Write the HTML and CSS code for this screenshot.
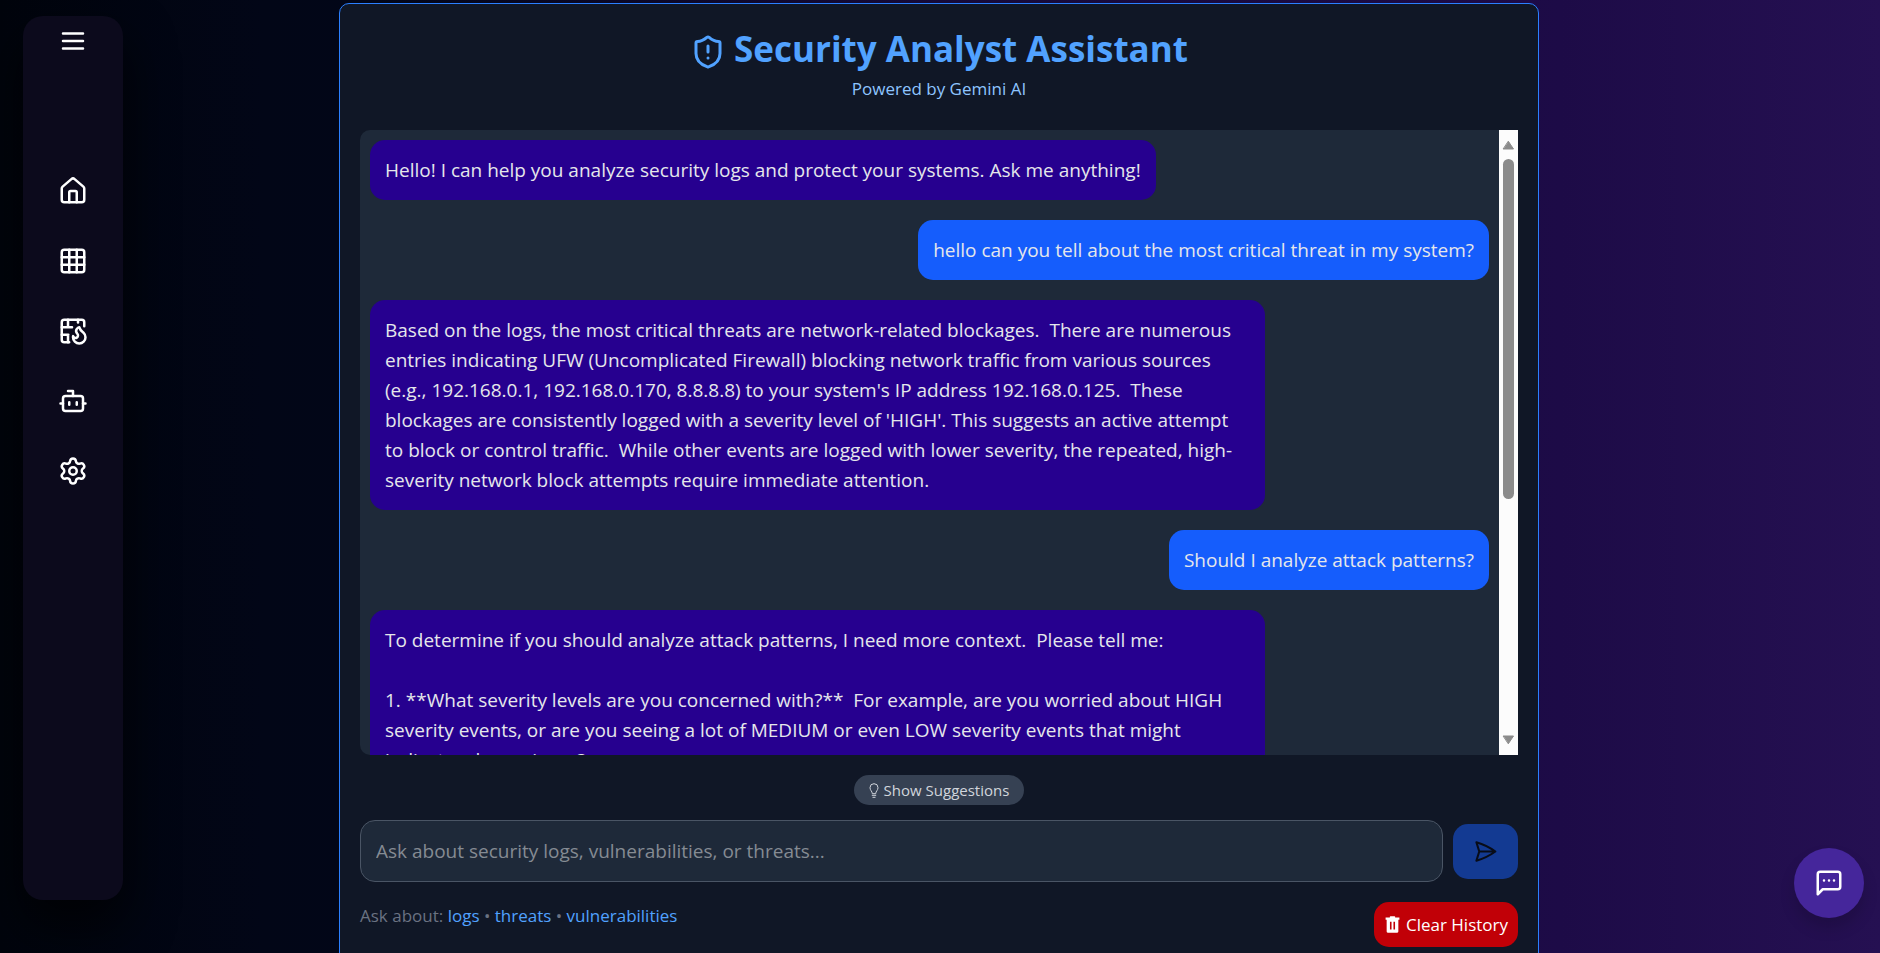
FILE: index.html
```html
<!DOCTYPE html>
<html lang="en">
<head>
<meta charset="utf-8">
<meta name="viewport" content="width=device-width, initial-scale=1">
<title>Security Analyst Assistant</title>
<link rel="stylesheet" href="styles.css">
</head>
<body>
<aside class="sidebar">
  <button class="nav-item" type="button" aria-label="Toggle menu">
    <svg class="icon" viewBox="0 0 24 24"><path d="M4 6h16M4 12h16M4 18h16"/></svg>
  </button>
  <nav class="nav" aria-label="Main">
    <a class="nav-item" href="#home" aria-label="Home">
      <svg class="icon" viewBox="0 0 24 24"><path d="M15 21v-8a1 1 0 0 0-1-1h-4a1 1 0 0 0-1 1v8"/><path d="M3 10a2 2 0 0 1 .709-1.528l7-5.999a2 2 0 0 1 2.582 0l7 5.999A2 2 0 0 1 21 10v9a2 2 0 0 1-2 2H5a2 2 0 0 1-2-2z"/></svg>
    </a>
    <a class="nav-item" href="#logs" aria-label="Logs">
      <svg class="icon" viewBox="0 0 24 24"><rect x="3" y="3" width="18" height="18" rx="2"/><path d="M3 9h18M3 15h18M9 3v18M15 3v18"/></svg>
    </a>
    <a class="nav-item" href="#firewall" aria-label="Firewall">
      <svg class="icon" viewBox="0 0 24 24"><path d="M16 3v2.107"/><path d="M17 9c1 3 2.5 3.5 3.5 4.5A5 5 0 0 1 22 17a5 5 0 0 1-10 0c0-.3 0-.6.1-.9a2 2 0 1 0 3.3-2C13 11.5 16 9 17 9"/><path d="M21 8.274V5a2 2 0 0 0-2-2H5a2 2 0 0 0-2 2v14a2 2 0 0 0 2 2h3.938"/><path d="M3 15h5.253M3 9h8.228M8 15v6M8 3v6"/></svg>
    </a>
    <a class="nav-item" href="#assistant" aria-label="Assistant">
      <svg class="icon" viewBox="0 0 24 24"><path d="M12 8V4H8"/><rect x="4" y="8" width="16" height="12" rx="2"/><path d="M2 14h2M20 14h2M15 13v2M9 13v2"/></svg>
    </a>
    <a class="nav-item" href="#settings" aria-label="Settings">
      <svg class="icon" viewBox="0 0 24 24"><path d="M9.671 4.136a2.34 2.34 0 0 1 4.659 0 2.34 2.34 0 0 0 3.319 1.915 2.34 2.34 0 0 1 2.33 4.033 2.34 2.34 0 0 0 0 3.831 2.34 2.34 0 0 1-2.33 4.033 2.34 2.34 0 0 0-3.319 1.915 2.34 2.34 0 0 1-4.659 0 2.34 2.34 0 0 0-3.32-1.915 2.34 2.34 0 0 1-2.33-4.033 2.34 2.34 0 0 0 0-3.831A2.34 2.34 0 0 1 6.35 6.051a2.34 2.34 0 0 0 3.319-1.915"/><circle cx="12" cy="12" r="3"/></svg>
    </a>
  </nav>
</aside>

<main class="panel">
  <header class="header">
    <h1 class="title">
      <svg class="title-icon" viewBox="0 0 24 24"><path d="M20 13c0 5-3.500 7.500-7.660 8.950a1 1 0 0 1-.67-.01C7.500 20.500 4 18 4 13V6a1 1 0 0 1 1-1c2 0 4.500-1.200 6.240-2.720a1.170 1.170 0 0 1 1.520 0C14.510 3.810 17 5 19 5a1 1 0 0 1 1 1z"/><path d="M12 8v4M12 16h.01"/></svg>
      <span>Security Analyst Assistant</span>
    </h1>
    <p class="subtitle">Powered by Gemini AI</p>
  </header>

  <section class="chat" aria-label="Conversation">
    <div class="messages">
      <p class="bubble bot">Hello! I can help you analyze security logs and protect your systems. Ask me anything!</p>
      <p class="bubble user">hello can you tell about the most critical threat in my system?</p>
      <p class="bubble bot">Based on the logs, the most critical threats are network-related blockages.  There are numerous entries indicating UFW (Uncomplicated Firewall) blocking network traffic from various sources (e.g., 192.168.0.1, 192.168.0.170, 8.8.8.8) to your system's IP address 192.168.0.125.  These blockages are consistently logged with a severity level of 'HIGH'. This suggests an active attempt to block or control traffic.  While other events are logged with lower severity, the repeated, high-severity network block attempts require immediate attention.</p>
      <p class="bubble user">Should I analyze attack patterns?</p>
      <p class="bubble bot">To determine if you should analyze attack patterns, I need more context.  Please tell me:

1. **What severity levels are you concerned with?**  For example, are you worried about HIGH severity events, or are you seeing a lot of MEDIUM or even LOW severity events that might indicate a larger issue?</p>
    </div>
    <div class="scrollbar" aria-hidden="true">
      <svg class="arrow" viewBox="0 0 13 10"><path d="M6.500 1.500 11.500 9h-10z"/></svg>
      <div class="track"><div class="thumb"></div></div>
      <svg class="arrow" viewBox="0 0 13 10"><path d="M1.500 1h10l-5 7.500z"/></svg>
    </div>
  </section>

  <button class="suggest" type="button">
    <svg class="suggest-icon" viewBox="0 0 10 15"><path d="M3.300 10.300C3.300 8.300 1 7.300 1 4.700a4 4 0 0 1 8 0C9 7.300 6.700 8.300 6.700 10.300zM3.200 12.300h3.600M3.900 14.300h2.200"/></svg>
    Show Suggestions
  </button>

  <form class="composer">
    <input class="field" type="text" aria-label="Message" placeholder="Ask about security logs, vulnerabilities, or threats...">
    <button class="send" type="button" aria-label="Send">
      <svg class="send-icon" viewBox="0 0 24 24"><path d="M6 12 3.269 3.126A59.768 59.768 0 0 1 21.485 12 59.770 59.770 0 0 1 3.270 20.876L5.999 12zm0 0h15"/></svg>
    </button>
  </form>

  <footer class="footer">
    <p class="topics">Ask about: <a href="#logs">logs</a> • <a href="#threats">threats</a> • <a href="#vulnerabilities">vulnerabilities</a></p>
    <button class="clear" type="button">
      <svg class="clear-icon" viewBox="0 0 16 16"><path fill-rule="evenodd" d="M5.500 1.500V.8Q5.500.2 6.100.2h3.800q.6 0 .6.600v.7H14.500v2h-1v11q0 1.300-1.300 1.300H3.800Q2.500 15.800 2.500 14.500v-11h-1v-2zM5.600 5.300v7.500h1.500V5.300zM8.900 5.300v7.500h1.500V5.300z"/></svg>
      Clear History
    </button>
  </footer>
</main>

<button class="fab" type="button" aria-label="Open chat">
  <svg class="icon" viewBox="0 0 24 24"><path d="M21 15a2 2 0 0 1-2 2H7l-4 4V5a2 2 0 0 1 2-2h14a2 2 0 0 1 2 2z"/><path d="M8 10h.01M12 10h.01M16 10h.01"/></svg>
</button>
</body>
</html>
```
FILE: styles.css
```css
* {
  box-sizing: border-box;
}

html {
  height: 100%;
}

body {
  margin: 0;
  height: 100%;
  overflow: hidden;
  padding: 3px 2px 0 0;
  font-family: "Segoe UI", "Open Sans", sans-serif;
  font-size: 19px;
  line-height: 30px;
  color: #e5e7eb;
  background: linear-gradient(to right, #01040c 0%, #020617 14%, #020618 20%, #160a38 50%, #1d0b47 83%, #251052 100%);
}

h1, p {
  margin: 0;
}

button, input {
  font: inherit;
  border: 0;
}

svg {
  fill: none;
  stroke: currentColor;
  stroke-width: 2;
  stroke-linecap: round;
  stroke-linejoin: round;
  flex: none;
}

.icon {
  width: 30px;
  height: 30px;
}

/* Sidebar */
.sidebar {
  position: fixed;
  top: 16px;
  bottom: 53px;
  left: 23px;
  width: 100px;
  padding: 10px 0;
  display: flex;
  flex-direction: column;
  align-items: center;
  gap: 120px;
  border-radius: 20px;
  background: #0c0a1c;
  box-shadow: 0 25px 50px rgba(0, 0, 0, 0.75);
}

.nav {
  display: flex;
  flex-direction: column;
  gap: 40px;
}

.nav-item {
  display: flex;
  padding: 0;
  color: #ffffff;
  background: none;
}

.sidebar > .nav-item {
  height: 30px;
}

/* Main panel */
.panel {
  width: 1200px;
  max-width: 64%;
  min-height: 100%;
  margin: 0 auto;
  padding: 20px;
  display: flex;
  flex-direction: column;
  border: 1px solid #2b7fff;
  border-radius: 10px;
  background: #101726;
}

.header {
  padding-bottom: 26px;
  text-align: center;
}

.title {
  display: flex;
  justify-content: center;
  align-items: center;
  gap: 8px;
  font-size: 35px;
  line-height: 50px;
  color: #51a2ff;
}

.title-icon {
  width: 36px;
  height: 36px;
  margin-top: 6px;
}

.subtitle {
  font-size: 17px;
  color: #8ec5ff;
}

/* Conversation */
.chat {
  height: 625px;
  display: flex;
  overflow: hidden;
  border-radius: 10px 0 0 10px;
  background: #1e2939;
}

.messages {
  flex: 1;
  padding: 10px;
  display: flex;
  flex-direction: column;
  align-items: flex-start;
  gap: 20px;
  overflow: hidden;
}

.bubble {
  flex: none;
  max-width: 80%;
  padding: 15px;
  border-radius: 15px;
  white-space: pre-wrap;
}

.bot {
  background: #26008f;
}

.user {
  align-self: flex-end;
  background: #155dfc;
}

.scrollbar {
  width: 19px;
  padding: 10px 0;
  display: flex;
  flex-direction: column;
  align-items: center;
  gap: 9px;
  background: #fcfcfc;
}

.arrow {
  width: 13px;
  height: 10px;
  fill: #8b8b8b;
  stroke: #8b8b8b;
  stroke-width: 1;
}

.track {
  flex: 1;
  width: 11px;
}

.thumb {
  height: 60%;
  border-radius: 6px;
  background: #8b8b8b;
}

/* Controls */
.suggest {
  align-self: center;
  height: 30px;
  margin: 20px 0 15px;
  padding: 0 15px;
  display: flex;
  align-items: center;
  gap: 5px;
  border-radius: 15px;
  font-size: 15px;
  color: #d1d5dc;
  background: #364153;
}

.suggest-icon {
  width: 10px;
  height: 15px;
  stroke-width: 1;
}

.composer {
  display: flex;
  align-items: center;
  gap: 10px;
}

.field {
  flex: 1;
  min-width: 0;
  height: 62px;
  padding: 0 15px;
  border: 1px solid #4a5565;
  border-radius: 15px;
  color: #e5e7eb;
  background: #1e2939;
}

.field::placeholder {
  color: #858b93;
  opacity: 1;
}

.send {
  width: 65px;
  height: 55px;
  display: flex;
  justify-content: center;
  align-items: center;
  border-radius: 15px;
  color: #080c18;
  background: #133a92;
}

.send-icon {
  width: 25px;
  height: 25px;
}

.footer {
  margin-top: 20px;
  display: flex;
  justify-content: space-between;
  align-items: flex-start;
  font-size: 17px;
  line-height: 28px;
}

.topics {
  color: #6a7282;
}

.topics a {
  color: #51a2ff;
  text-decoration: none;
}

.clear {
  height: 45px;
  padding: 0 10px;
  display: flex;
  align-items: center;
  gap: 5px;
  border-radius: 15px;
  color: #ffffff;
  background: #c10007;
}

.clear-icon {
  width: 17px;
  height: 17px;
  fill: currentColor;
  stroke: none;
}

.fab {
  position: fixed;
  right: 16px;
  bottom: 35px;
  width: 70px;
  height: 70px;
  display: flex;
  justify-content: center;
  align-items: center;
  border-radius: 50%;
  color: #ffffff;
  background: #45269b;
  box-shadow: 0 10px 15px rgba(0, 0, 0, 0.15);
}
```
